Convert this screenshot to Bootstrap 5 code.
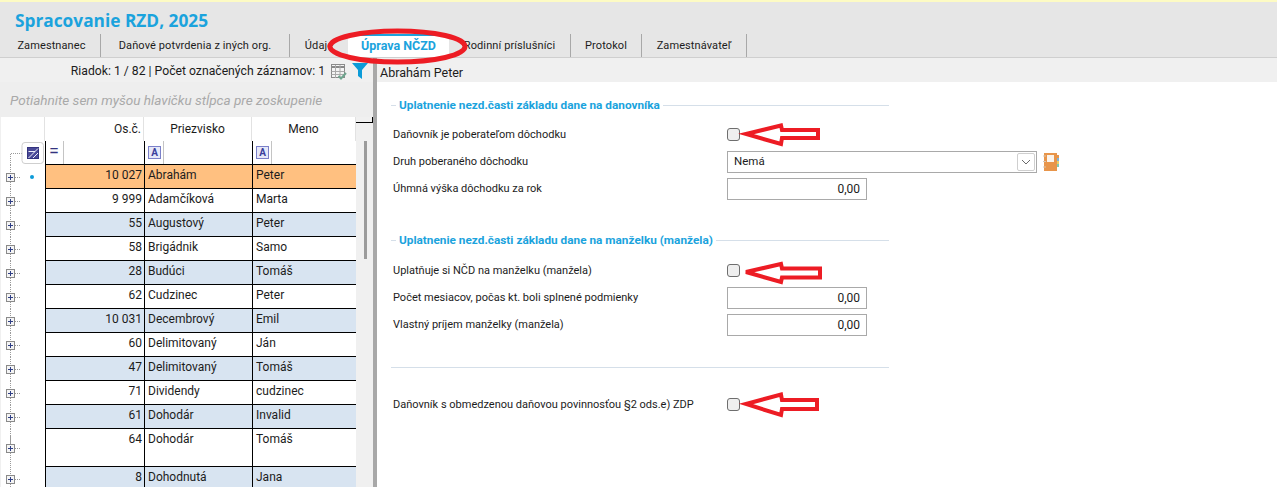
<!DOCTYPE html>
<html lang="sk">
<head>
<meta charset="utf-8">
<title>Spracovanie RZD, 2025</title>
<link href="https://cdn.jsdelivr.net/npm/bootstrap@5.3.0/dist/css/bootstrap.min.css" rel="stylesheet">
<style>
html,body{height:487px;overflow:hidden}
body{font-family:Roboto,"Liberation Sans",sans-serif;font-size:12px;color:#1c1c1c;background:#fff;position:relative;line-height:1.2}
.yellow-strip{height:2px;background:#fdfbc4}
.app-head{height:56px;background:#e6e6e6;border-bottom:1px solid #cfcfcf}
.app-title{height:32px;margin:0;padding:7px 0 0 15px;font-family:"Open Sans",sans-serif;font-weight:700;font-size:17.3px;line-height:24px;color:#1ba3dd}
.tabstrip{height:23px;padding-left:3px;flex-wrap:nowrap}
.tabstrip .nav-link{height:23px;padding:4px 0 0;text-align:center;color:#1c1c1c;border-right:1px solid #a8a8a8;font-size:11px;letter-spacing:.1px;line-height:16px}
.tabstrip .nav-link.active{background:#fff;color:#1ba3dd;font-weight:700;border-right:0;border-top:2px solid #1ba3dd;padding-top:2px;font-size:12.5px;letter-spacing:0}
.tabstrip .nav-item:nth-child(1) .nav-link{width:98px}
.tabstrip .nav-item:nth-child(2) .nav-link{width:189px}
.tabstrip .nav-item:nth-child(3) .nav-link{width:58px;border-right:0}
.tabstrip .nav-item:nth-child(4) .nav-link{width:101px}
.tabstrip .nav-item:nth-child(5) .nav-link{width:122px}
.tabstrip .nav-item:nth-child(6) .nav-link{width:71px}
.tabstrip .nav-item:nth-child(7) .nav-link{width:105px}
.workspace{height:429px}
.left-pane{width:373px;background:#f0f0f0;overflow:hidden;flex:none}
.splitter{width:4px;background:#a8a8a8;flex:none}
.right-pane{flex:1 1 auto;min-width:0;overflow:hidden}
.status-left{height:24px;padding-right:5px;gap:5px}
.status-left svg{display:block}
.status-text{margin-right:1px;padding-top:3px;font-size:12.2px}
.ico-table{margin-top:3px}
.ico-funnel{margin-top:1px}
.drop-zone{height:35px;padding:9px 0 0 10px;font-style:italic;color:#a9a9a9;font-size:13.55px;line-height:18px;background:#eeeeee}
.grid-wrap{padding-left:1px}
.table-area{width:355px;flex:none}
.grid-tbl{table-layout:fixed;width:355px;border-collapse:separate;border-spacing:0;margin:0;--bs-table-bg:transparent}
.grid-tbl>thead>tr>th,.grid-tbl>tbody>tr>td{padding:0;border:0;box-shadow:none;color:#1c1c1c;font-weight:400;vertical-align:middle;background:#fff}
.grid-tbl>thead>tr.caption-row>th{height:24px;text-align:center;border-right:1px solid #e2e2e2}
.grid-tbl>thead>tr.caption-row>th.num{text-align:right;padding-right:2px}
.grid-tbl>thead>tr.filter-row>th{height:24px;border-bottom:1px solid #000;border-left:1px solid #000}
.grid-tbl>thead>tr.filter-row>th.gut,.grid-tbl>tbody>tr>td.gut{border-left:0;border-bottom:0;background:#fff}
.grid-tbl>tbody>tr>td{height:24px;border-bottom:1px solid #000;border-left:1px solid #000;padding:0 3px 3px}
.grid-tbl>tbody>tr>td.gut{padding:0}
.grid-tbl>tbody>tr>td.num{text-align:right;padding-right:2px}
.grid-tbl>tbody>tr.sel>td:not(.gut){background:#ffc080}
.grid-tbl>tbody>tr.alt>td:not(.gut){background:#d8e4f1}
.grid-tbl>tbody>tr.tall>td{height:38px;vertical-align:top;padding-top:3px;padding-bottom:0}
.grid-tbl>tbody>tr.tall>td.gut{padding:0}
.gut svg{display:block}
.filter-cell{height:23px;padding-left:3px}
.filter-op{width:15px;height:23px;border-right:1px solid #c4c4c4;color:#33337f;font-size:18px;line-height:20px;font-weight:400;flex:none}
.filter-a{width:13px;height:13px;border:1px solid #7b80c9;background:#e6e8f8;color:#3a3f9c;font-size:10px;line-height:11px;font-weight:700;text-align:center;flex:none;margin-top:-1px}
.filter-sep{width:1px;height:23px;background:#c4c4c4;margin-left:2px;flex:none}
.scroll-col{width:17px;flex:none}
.scroll-corner{height:6px;border-bottom:1px solid #000;border-right:1px solid #000}
.scroll-thumb{width:3px;height:118px;margin:18px 0 0 8px;background:#9b9b9b}
.person-bar{height:24px;padding:7px 0 0 3px;background:#f0f0f0;font-size:12.5px;line-height:15px}
.form-area{width:512px;padding:11px 0 0 14px}
.legend-row{height:24px;color:#1ba3dd;font-weight:700;gap:3px;font-size:11.8px}
.legend-row::before{content:"";width:5px;height:1px;background:#d5dfe9;flex:none}
.legend-row::after{content:"";flex:1 1 auto;height:1px;background:#d5dfe9}
.form-line{height:27px;padding-left:2px}
.form-line label{width:334px;flex:none;margin:0;padding-top:1px;font-size:11px}
.chk{width:13px;height:13px;margin:0;border:1px solid #6e6e6e;border-radius:3px;background-color:#efefef;flex:none}
.num-field{width:140px;height:22px;min-height:0;padding:0 6px;border:1px solid #a9a9a9;border-radius:0;font-size:12px;color:#1c1c1c;text-align:right;background:#fff;flex:none}
.pick-box{width:310px;height:22px;border:1px solid #a9a9a9;padding:0 1px 0 6px;background:#fff;font-size:11.5px;flex:none}
.pick-btn{width:18px;height:18px;border:1px solid #cfcfcf;border-radius:2px;background:#fff;margin-left:auto;flex:none}
.book-ico{margin-left:6px;flex:none}
.section-two{margin-top:26px}
.section-two .legend-row{margin-bottom:5px}
.section-one .legend-row{margin-bottom:4px}
.divider-line{height:1px;background:#d5dfe9;margin:29px 0 23px}
.marks{position:absolute;left:0;top:0;pointer-events:none}
</style>
</head>
<body>
<svg width="0" height="0" class="d-block" style="position:absolute">
  <defs>
    <symbol id="node" viewBox="0 0 44 24">
      <path d="M9.500 0V8M9.500 17V24M14 12.500H20" fill="none" stroke="#9a9a9a" stroke-dasharray="1 1"/>
      <rect x="5.500" y="8.500" width="8" height="8" fill="#f4f4f4" stroke="#8a8a8a"/>
      <path d="M7 12.500H12M9.500 10V15" stroke="#2f3f85" stroke-width="1"/>
    </symbol>
  </defs>
</svg>
<div class="yellow-strip"></div>
<header class="app-head">
  <h1 class="app-title">Spracovanie RZD, 2025</h1>
  <ul class="nav tabstrip">
    <li class="nav-item"><a class="nav-link" href="#">Zamestnanec</a></li>
    <li class="nav-item"><a class="nav-link" href="#">Daňové potvrdenia z iných org.</a></li>
    <li class="nav-item"><a class="nav-link" href="#">Údaje</a></li>
    <li class="nav-item"><a class="nav-link active" href="#">Úprava NČZD</a></li>
    <li class="nav-item"><a class="nav-link" href="#">Rodinní príslušníci</a></li>
    <li class="nav-item"><a class="nav-link" href="#">Protokol</a></li>
    <li class="nav-item"><a class="nav-link" href="#">Zamestnávateľ</a></li>
  </ul>
</header>
<main class="workspace d-flex">
  <section class="left-pane">
    <div class="status-left d-flex align-items-center justify-content-end">
      <span class="status-text">Riadok: 1 / 82 | Počet označených záznamov: 1</span>
      <svg class="ico-table" width="16" height="16" viewBox="0 0 16 16"><rect x="0.500" y="0.500" width="13" height="13" fill="#f4f4f4" stroke="#8a8a8a"/><path d="M0.500 3H13.500" stroke="#888" stroke-width="2"/><path d="M0.500 7.500H13.500M0.500 10.500H13.500M4.500 1V14M9 1V14" stroke="#aaa"/><path d="M7.500 12L10 14.500L15 9" fill="none" stroke="#6fa58e" stroke-width="2"/></svg>
      <svg class="ico-funnel" width="16" height="16" viewBox="0 0 16 16"><path d="M0 0H16L10 7V16L6 13V7Z" fill="#0c9bd8"/></svg>
    </div>
    <div class="drop-zone">Potiahnite sem myšou hlavičku stĺpca pre zoskupenie</div>
    <div class="grid-wrap d-flex">
      <div class="table-area">
        <table class="table grid-tbl">
          <colgroup><col style="width:44px"><col style="width:99px"><col style="width:108px"><col style="width:104px"></colgroup>
          <thead>
            <tr class="caption-row"><th></th><th class="num">Os.č.</th><th>Priezvisko</th><th>Meno</th></tr>
            <tr class="filter-row">
              <th class="gut"><svg width="44" height="24" viewBox="0 0 44 24"><path d="M9.500 24V12.500H21" fill="none" stroke="#9a9a9a" stroke-dasharray="1 1"/><rect x="21" y="1.500" width="21.500" height="21" rx="3" fill="#fff" stroke="#cfcfcf"/><rect x="26.500" y="6.500" width="11" height="11" fill="#4a4a98" stroke="#33337f"/><path d="M27.500 17L37 7.500M32 17L37 12M27.500 10.500H34" stroke="#f0f0fa" fill="none"/></svg></th>
              <th><div class="filter-cell d-flex"><span class="filter-op">=</span></div></th>
              <th><div class="filter-cell d-flex align-items-center"><span class="filter-a">A</span><span class="filter-sep"></span></div></th>
              <th><div class="filter-cell d-flex align-items-center"><span class="filter-a">A</span><span class="filter-sep"></span></div></th>
            </tr>
          </thead>
          <tbody>
            <tr class="sel"><td class="gut"><svg width="44" height="24" viewBox="0 0 44 24"><use href="#node"/><circle cx="31" cy="12" r="2" fill="#0c9bd8"/></svg></td><td class="num">10 027</td><td>Abrahám</td><td>Peter</td></tr>
            <tr><td class="gut"><svg width="44" height="24" viewBox="0 0 44 24"><use href="#node"/></svg></td><td class="num">9 999</td><td>Adamčíková</td><td>Marta</td></tr>
            <tr class="alt"><td class="gut"><svg width="44" height="24" viewBox="0 0 44 24"><use href="#node"/></svg></td><td class="num">55</td><td>Augustový</td><td>Peter</td></tr>
            <tr><td class="gut"><svg width="44" height="24" viewBox="0 0 44 24"><use href="#node"/></svg></td><td class="num">58</td><td>Brigádnik</td><td>Samo</td></tr>
            <tr class="alt"><td class="gut"><svg width="44" height="24" viewBox="0 0 44 24"><use href="#node"/></svg></td><td class="num">28</td><td>Budúci</td><td>Tomáš</td></tr>
            <tr><td class="gut"><svg width="44" height="24" viewBox="0 0 44 24"><use href="#node"/></svg></td><td class="num">62</td><td>Cudzinec</td><td>Peter</td></tr>
            <tr class="alt"><td class="gut"><svg width="44" height="24" viewBox="0 0 44 24"><use href="#node"/></svg></td><td class="num">10 031</td><td>Decembrový</td><td>Emil</td></tr>
            <tr><td class="gut"><svg width="44" height="24" viewBox="0 0 44 24"><use href="#node"/></svg></td><td class="num">60</td><td>Delimitovaný</td><td>Ján</td></tr>
            <tr class="alt"><td class="gut"><svg width="44" height="24" viewBox="0 0 44 24"><use href="#node"/></svg></td><td class="num">47</td><td>Delimitovaný</td><td>Tomáš</td></tr>
            <tr><td class="gut"><svg width="44" height="24" viewBox="0 0 44 24"><use href="#node"/></svg></td><td class="num">71</td><td>Dividendy</td><td>cudzinec</td></tr>
            <tr class="alt"><td class="gut"><svg width="44" height="24" viewBox="0 0 44 24"><use href="#node"/></svg></td><td class="num">61</td><td>Dohodár</td><td>Invalid</td></tr>
            <tr class="tall"><td class="gut"><svg width="44" height="38" viewBox="0 0 44 38"><path d="M9.500 0V38" stroke="#9a9a9a" stroke-dasharray="1 1"/><use href="#node" y="7" width="44" height="24"/></svg></td><td class="num">64</td><td>Dohodár</td><td>Tomáš</td></tr>
            <tr class="alt"><td class="gut"><svg width="44" height="24" viewBox="0 0 44 24"><use href="#node"/></svg></td><td class="num">8</td><td>Dohodnutá</td><td>Jana</td></tr>
          </tbody>
        </table>
      </div>
      <div class="scroll-col">
        <div class="scroll-corner"></div>
        <div class="scroll-thumb"></div>
      </div>
    </div>
  </section>
  <div class="splitter"></div>
  <section class="right-pane">
    <div class="person-bar">Abrahám Peter</div>
    <div class="form-area">
      <div class="section-one">
        <div class="legend-row d-flex align-items-center">Uplatnenie nezd.časti základu dane na danovníka</div>
        <div class="form-line d-flex align-items-center"><label for="c1">Daňovník je poberateľom dôchodku</label><input id="c1" class="form-check-input chk" type="checkbox"></div>
        <div class="form-line d-flex align-items-center"><label>Druh poberaného dôchodku</label>
          <div class="pick-box d-flex align-items-center"><span>Nemá</span><span class="pick-btn d-flex align-items-center justify-content-center"><svg width="10" height="6" viewBox="0 0 10 6"><path d="M1 1L5 5L9 1" fill="none" stroke="#6a6a6a"/></svg></span></div>
          <svg class="book-ico" width="17" height="20" viewBox="0 0 17 20"><rect x="1" y="1" width="13" height="18" fill="#e8954a"/><rect x="4" y="3" width="7" height="7" fill="#fbf4ec"/><path d="M0 4H3M0 9.500H3M0 15H3" stroke="#d9c6b0"/><path d="M15 3V6" stroke="#e8954a" stroke-width="2"/><path d="M15 6V9" stroke="#7fb3d8" stroke-width="2"/><path d="M15 9V12" stroke="#e8cf6a" stroke-width="2"/><path d="M15 12V15" stroke="#7fc7b5" stroke-width="2"/></svg>
        </div>
        <div class="form-line d-flex align-items-center"><label for="i1">Úhmná výška dôchodku za rok</label><input id="i1" class="form-control num-field" value="0,00"></div>
      </div>
      <div class="section-two">
        <div class="legend-row d-flex align-items-center">Uplatnenie nezd.časti základu dane na manželku (manžela)</div>
        <div class="form-line d-flex align-items-center"><label for="c2">Uplatňuje si NČD na manželku (manžela)</label><input id="c2" class="form-check-input chk" type="checkbox"></div>
        <div class="form-line d-flex align-items-center"><label for="i2">Počet mesiacov, počas kt. boli splnené podmienky</label><input id="i2" class="form-control num-field" value="0,00"></div>
        <div class="form-line d-flex align-items-center"><label for="i3">Vlastný príjem manželky (manžela)</label><input id="i3" class="form-control num-field" value="0,00"></div>
      </div>
      <div class="divider-line"></div>
      <div class="form-line d-flex align-items-center"><label for="c3">Daňovník s obmedzenou daňovou povinnosťou §2 ods.e) ZDP</label><input id="c3" class="form-check-input chk" type="checkbox"></div>
    </div>
  </section>
</main>
<svg class="marks" width="1277" height="487" viewBox="0 0 1277 487" fill="none" stroke="#ed1c24">
  <ellipse cx="397.500" cy="46.500" rx="67.500" ry="15.500" stroke-width="5"/>
  <path d="M746 134L781 125.500L782 130H818V138H782L781 144Z" stroke-width="4" fill="#fff"/>
  <path d="M746 272L781 264L782 268.500H820V277.500H782L781 282Z" stroke-width="4" fill="#fff"/>
  <path d="M746 404L781 394.500L782 400H817V409H782L781 415Z" stroke-width="4" fill="#fff"/>
</svg>
<script src="https://cdn.jsdelivr.net/npm/bootstrap@5.3.0/dist/js/bootstrap.bundle.min.js"></script>
</body>
</html>
